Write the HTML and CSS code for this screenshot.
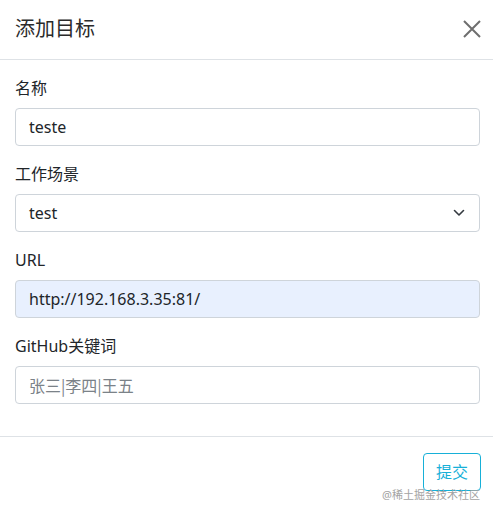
FILE: index.html
```html
<!DOCTYPE html>
<html lang="zh">
<head>
<meta charset="utf-8">
<link rel="stylesheet" href="styles.css">
</head>
<body>
<div class="modal">
  <div class="modal-header">
    <h5 class="modal-title">添加目标</h5>
    <button class="btn-close" type="button" aria-label="Close">
      <svg width="18" height="18" viewBox="0 0 18 18"><path d="M1 1L17 17M17 1L1 17" stroke="#6e6e6e" stroke-width="2" fill="none"/></svg>
    </button>
  </div>
  <div class="modal-body">
    <div class="field">
      <label class="label">名称</label>
      <div class="input">teste</div>
    </div>
    <div class="field">
      <label class="label">工作场景</label>
      <div class="input select">
        <span>test</span>
        <svg class="chev" width="12" height="8" viewBox="0 0 12 8"><path d="M1.5 1.5L6 6L10.5 1.5" stroke="#343a40" stroke-width="1.6" fill="none" stroke-linecap="round" stroke-linejoin="round"/></svg>
      </div>
    </div>
    <div class="field">
      <label class="label">URL</label>
      <div class="input autofill">http://192.168.3.35:81/</div>
    </div>
    <div class="field">
      <label class="label">GitHub关键词</label>
      <div class="input placeholder">张三|李四|王五</div>
    </div>
  </div>
  <div class="modal-footer">
    <button class="btn-submit" type="button">提交</button>
    <span class="watermark">@稀土掘金技术社区</span>
  </div>
</div>
</body>
</html>
```

FILE: styles.css
```css
* { box-sizing: border-box; }
html, body { margin: 0; padding: 0; background: #fff; }
body {
  font-family: "Noto Sans", "Noto Sans CJK SC", sans-serif;
  color: #212529;
  font-size: 16px;
}
.modal { width: 493px; height: 514px; background: #fff; }
.modal-header {
  height: 60px;
  border-bottom: 1px solid #dee2e6;
  display: flex;
  align-items: center;
  justify-content: space-between;
  padding: 0 12px 2px 15px;
}
.modal-title {
  margin: 0;
  font-size: 20px;
  font-weight: 400;
  line-height: 30px;
  color: #2b2b2b;
}
.btn-close {
  border: 0;
  background: none;
  padding: 0;
  width: 18px;
  height: 18px;
  display: flex;
}
.modal-body { padding: 16px 13px 16px 15px; }
.field { margin-bottom: 16px; }
.label { display: block; line-height: 24px; margin-bottom: 8px; font-size: 16px; }
.input {
  height: 38px;
  border: 1px solid #ced4da;
  border-radius: 4px;
  padding: 0 13px;
  display: flex;
  align-items: center;
  line-height: 24px;
  font-size: 16px;
  color: #212529;
}
.select { justify-content: space-between; padding-right: 14px; }
.chev { display: block; }
.autofill { background: #e8f0fe; }
.placeholder { color: #7b8288; font-family: "Noto Sans CJK SC", sans-serif; }
.modal-footer {
  position: relative;
  border-top: 1px solid #dee2e6;
  padding: 16px 12px 16px 0;
  display: flex;
  justify-content: flex-end;
}
.btn-submit {
  font-family: inherit;
  font-size: 16px;
  line-height: 24px;
  padding: 6px 12px;
  height: 38px;
  width: 58px;
  background: #fff;
  color: #17b0d8;
  border: 1px solid #17b0d8;
  border-radius: 4px;
}
.watermark {
  position: absolute;
  right: 13px;
  top: 51px;
  font-size: 11px;
  color: #a3a3a3;
  line-height: 14px;
}
```
